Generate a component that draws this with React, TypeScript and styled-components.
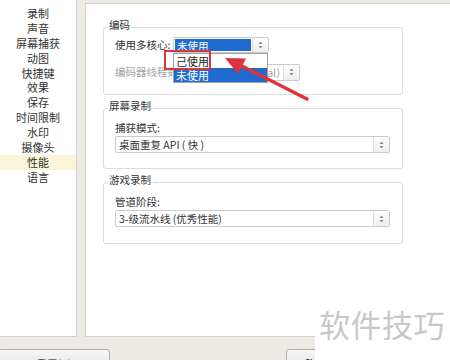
import React from "react";
import styled, { createGlobalStyle } from "styled-components";

const GlobalStyle = createGlobalStyle`
  html, body {
    margin: 0;
    padding: 0;
  }
  body {
    width: 450px;
    height: 360px;
    overflow: hidden;
    background: #edeae5;
    font-family: "Noto Sans CJK SC", "Liberation Sans", sans-serif;
    font-size: 10.5px;
    color: #333;
  }
`;

const Window = styled.div`
  position: relative;
  width: 450px;
  height: 360px;
  overflow: hidden;
  background: #edeae5;
  display: flex;
  flex-direction: column;
`;

const Main = styled.div`
  display: flex;
  height: 337px;
  flex-shrink: 0;
`;

const Sidebar = styled.ul`
  box-sizing: border-box;
  width: 78px;
  margin: -1px 8px 0 -1px;
  padding: 6px 0 0;
  list-style: none;
  background: #fff;
  border: 1px solid #d4d1cb;
`;

const NavItem = styled.li<{ $active?: boolean }>`
  height: 14.9px;
  line-height: 14.9px;
  font-size: 11px;
  text-align: center;
  color: #333;
  background: ${(p) => (p.$active ? "#fbf4d8" : "transparent")};
`;

const Panel = styled.div`
  flex: 1;
  margin: 3px -20px 0 0;
  padding: 15px 0 0 17px;
  background: #fff;
  border: 1px solid #d4d1cb;
  display: flex;
  flex-direction: column;
  gap: 5px;
`;

const Group = styled.fieldset<{ $pt: number; $pb: number }>`
  box-sizing: border-box;
  width: 300px;
  margin: 0;
  padding: ${(p) => p.$pt}px 0 ${(p) => p.$pb}px 11px;
  border: 1px solid #dcdcdc;
  border-radius: 3px;
  min-inline-size: 0;
`;

const Legend = styled.legend`
  margin-left: -7px;
  padding: 0 2px 4px 1px;
  line-height: 12px;
  font-size: 10.5px;
  color: #333;
`;

const Row = styled.div<{ $mt?: number }>`
  display: flex;
  align-items: center;
  height: 16px;
  margin-top: ${(p) => p.$mt ?? 0}px;
`;

const Label = styled.span<{ $muted?: boolean; $w: number }>`
  flex: 0 0 ${(p) => p.$w}px;
  line-height: 12px;
  color: ${(p) => (p.$muted ? "#a3a3a3" : "#333")};
  white-space: nowrap;
`;

const FieldLabel = styled.div`
  line-height: 12px;
  color: #333;
`;

const SelectWrap = styled.div`
  position: relative;
`;

const Select = styled.div<{ $w: number; $h?: number; $mt?: number }>`
  box-sizing: border-box;
  display: flex;
  width: ${(p) => p.$w}px;
  height: ${(p) => p.$h ?? 17}px;
  margin-top: ${(p) => p.$mt ?? 0}px;
  border: 1px solid #cbcbcb;
  border-radius: 2px;
  background: #fff;
`;

const Value = styled.div<{ $selected?: boolean; $muted?: boolean }>`
  flex: 1;
  padding-left: ${(p) => (p.$selected ? 2 : 3)}px;
  margin: ${(p) => (p.$selected ? "1px" : "0")};
  line-height: ${(p) => (p.$selected ? 13 : 15)}px;
  white-space: nowrap;
  overflow: hidden;
  background: ${(p) => (p.$selected ? "#1f6bd0" : "transparent")};
  color: ${(p) => (p.$selected ? "#fff" : p.$muted ? "#a3a3a3" : "#333")};
`;

const Spinner = styled.div`
  width: 15px;
  display: flex;
  align-items: center;
  justify-content: center;
  border-left: 1px solid #dedede;
  background: linear-gradient(#fdfdfd, #eeeeee);
`;

const DropList = styled.ul`
  position: absolute;
  left: 0;
  top: 16px;
  z-index: 2;
  box-sizing: border-box;
  width: 95px;
  margin: 0;
  padding: 0;
  list-style: none;
  background: #fff;
  border: 1px solid #a0a0a0;
`;

const DropItem = styled.li<{ $active?: boolean }>`
  height: 14px;
  line-height: 14px;
  padding-left: 2px;
  font-size: 11px;
  background: ${(p) => (p.$active ? "#1f6bd0" : "#fff")};
  color: ${(p) => (p.$active ? "#fff" : "#222")};
`;

const Footer = styled.div`
  display: flex;
  padding-top: 12px;
`;

const Button = styled.button<{ $w: number; $ml: number }>`
  width: ${(p) => p.$w}px;
  height: 26px;
  margin-left: ${(p) => p.$ml}px;
  padding: 3px 0 0;
  border: 1px solid #adadad;
  border-radius: 3px;
  background: linear-gradient(#f7f7f7, #dcdcdc);
  font-family: inherit;
  font-size: 10.5px;
  color: #222;
  text-align: center;
  vertical-align: top;
  line-height: 12px;
`;

const Highlight = styled.div`
  position: absolute;
  left: 164px;
  top: 50px;
  width: 47px;
  height: 20px;
  box-sizing: border-box;
  border: 2px solid #d8353d;
  z-index: 3;
`;

const ArrowSvg = styled.svg`
  position: absolute;
  left: 0;
  top: 0;
  z-index: 4;
  pointer-events: none;
`;

const Watermark = styled.div`
  position: absolute;
  left: 315px;
  top: 304px;
  width: 135px;
  height: 56px;
  background: #fff;
  z-index: 5;
  padding: 2px 0 0 4px;
  box-sizing: border-box;
  font-size: 31px;
  line-height: 36px;
  color: #c8c8c8;
  letter-spacing: 0.5px;
`;

const SpinIcon = () => (
  <svg width="5" height="8" viewBox="0 0 5 8">
    <path d="M2.5 0.5 L4.5 3 L0.5 3 Z" fill="#8a8a8a" />
    <path d="M2.5 7.5 L4.5 5 L0.5 5 Z" fill="#8a8a8a" />
  </svg>
);

const navItems = [
  "录制",
  "声音",
  "屏幕捕获",
  "动图",
  "快捷键",
  "效果",
  "保存",
  "时间限制",
  "水印",
  "摄像头",
  "性能",
  "语言",
];

export default function App() {
  return (
    <>
      <GlobalStyle />
      <Window>
        <Main>
          <Sidebar>
            {navItems.map((n) => (
              <NavItem key={n} $active={n === "性能"}>
                {n}
              </NavItem>
            ))}
          </Sidebar>
          <Panel>
            <Group $pt={2} $pb={14}>
              <Legend>编码</Legend>
              <Row>
                <Label $w={58}>使用多核心:</Label>
                <SelectWrap>
                  <Select $w={96} $h={16}>
                    <Value $selected>未使用</Value>
                    <Spinner>
                      <SpinIcon />
                    </Spinner>
                  </Select>
                  <DropList>
                    <DropItem>己使用</DropItem>
                    <DropItem $active>未使用</DropItem>
                  </DropList>
                </SelectWrap>
              </Row>
              <Row $mt={11}>
                <Label $muted $w={83}>编码器线程数量:</Label>
                <Select $w={102}>
                  <Value $muted>默认优 (Normal）</Value>
                  <Spinner>
                    <SpinIcon />
                  </Spinner>
                </Select>
              </Row>
            </Group>
            <Group $pt={6} $pb={15}>
              <Legend>屏幕录制</Legend>
              <FieldLabel>捕获模式:</FieldLabel>
              <Select $w={275} $mt={2}>
                <Value>桌面重复 API ( 快 )</Value>
                <Spinner>
                  <SpinIcon />
                </Spinner>
              </Select>
            </Group>
            <Group $pt={6} $pb={16}>
              <Legend>游戏录制</Legend>
              <FieldLabel>管道阶段:</FieldLabel>
              <Select $w={275} $mt={2}>
                <Value>3-级流水线 (优秀性能)</Value>
                <Spinner>
                  <SpinIcon />
                </Spinner>
              </Select>
            </Group>
          </Panel>
        </Main>
        <Footer>
          <Button $w={112} $ml={-2}>重置(R)</Button>
          <Button $w={60} $ml={176}>确定</Button>
        </Footer>
        <Highlight />
        <ArrowSvg width="450" height="360" viewBox="0 0 450 360">
          <line x1="307" y1="99" x2="236" y2="63" stroke="#e0323a" strokeWidth="3.5" strokeLinecap="round" />
          <path d="M225 58 L246 58.5 L238 74 Z" fill="#e0323a" />
        </ArrowSvg>
        <Watermark>软件技巧</Watermark>
      </Window>
    </>
  );
}
